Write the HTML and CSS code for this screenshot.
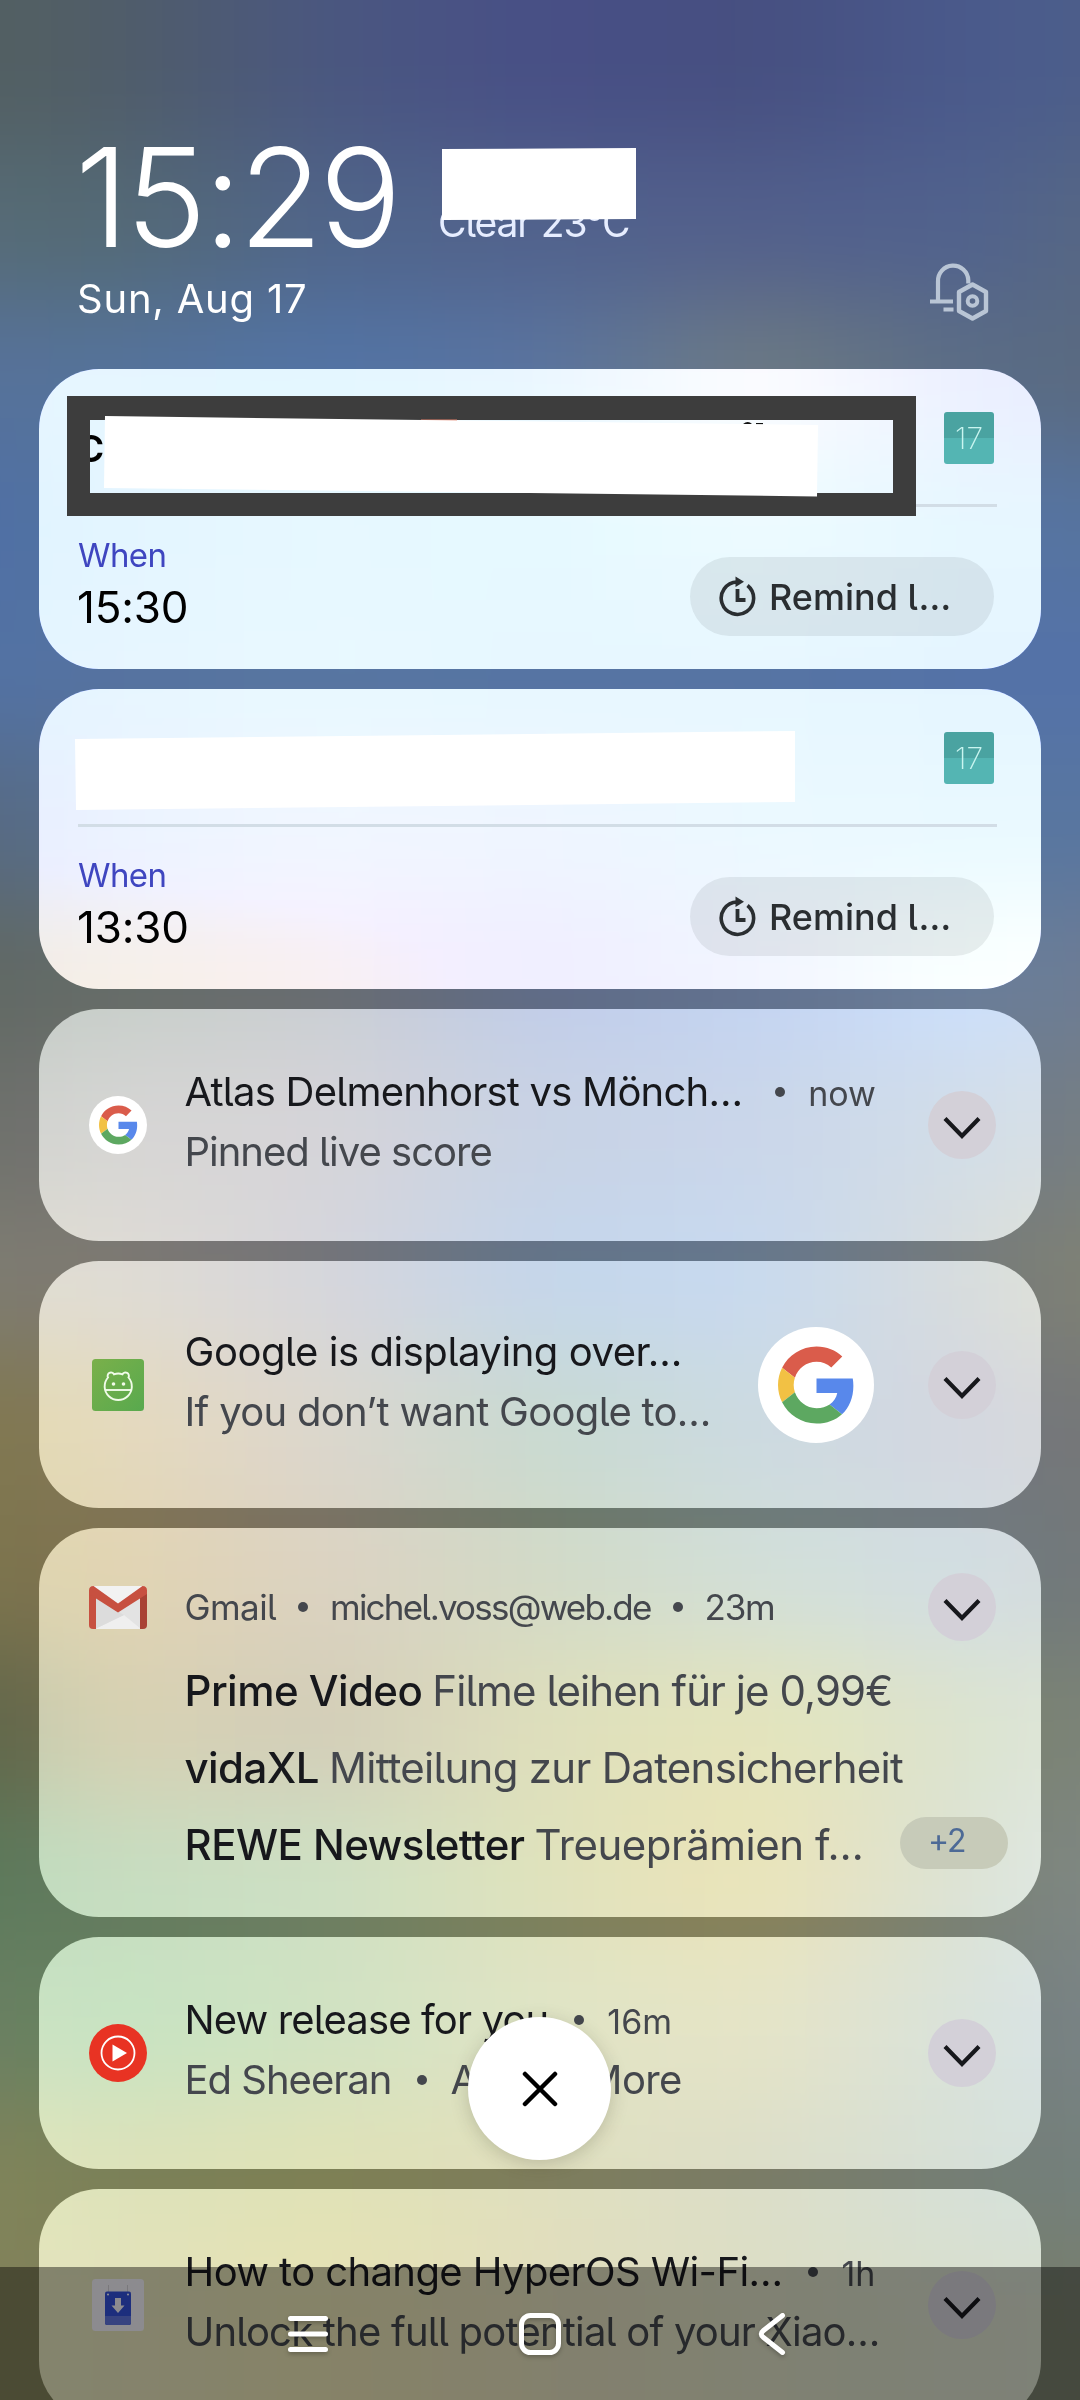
FILE: index.html
```html
<!DOCTYPE html>
<html lang="en">
<head>
<meta charset="utf-8">
<title>Notifications</title>
<link rel="stylesheet" href="styles.css">
</head>
<body>
<svg class="defs" width="0" height="0" aria-hidden="true">
  <symbol id="google" viewBox="0 0 48 48">
    <path fill="#da5c4b" d="M24 9.5c3.54 0 6.71 1.22 9.21 3.6l6.85-6.85C35.9 2.38 30.47 0 24 0 14.62 0 6.51 5.38 2.56 13.22l7.98 6.19C12.43 13.72 17.74 9.5 24 9.5z"/>
    <path fill="#5888eb" d="M46.98 24.55c0-1.57-.15-3.09-.38-4.55H24v9.02h12.94c-.58 2.96-2.26 5.48-4.78 7.18l7.73 6c4.51-4.18 7.09-10.36 7.09-17.65z"/>
    <path fill="#f2c144" d="M10.53 28.59c-.48-1.45-.76-2.99-.76-4.59s.27-3.14.76-4.59l-7.98-6.19C.92 16.46 0 20.12 0 24c0 3.88.92 7.54 2.56 10.78l7.97-6.19z"/>
    <path fill="#5da861" d="M24 48c6.48 0 11.93-2.13 15.89-5.81l-7.73-6c-2.15 1.45-4.92 2.3-8.16 2.3-6.26 0-11.57-4.22-13.47-9.91l-7.98 6.19C6.51 42.62 14.62 48 24 48z"/>
  </symbol>
  <symbol id="chevron" viewBox="0 0 68 68">
    <path d="M17 27.5 34 45 51 27.5" fill="none" stroke="#17181c" stroke-width="4.2"/>
  </symbol>
  <symbol id="later" viewBox="0 0 40 42">
    <path d="M28.5 9.500A16.200 16.200 0 1 1 18 6" fill="none" stroke="#2a2e31" stroke-width="3.6"/>
    <path d="M16.500 0.500 25 5.800 16.500 11z" fill="#2a2e31"/>
    <path d="M18.500 13v11h8" fill="none" stroke="#2a2e31" stroke-width="3.8"/>
  </symbol>
</svg>

<div class="backdrop">
  <div class="wallpaper">
    <i class="w1"></i><i class="w1"></i><i class="w2"></i><i class="w3"></i><i class="w4"></i><i class="w5"></i><i class="w6"></i><i class="w7"></i><i class="w8"></i><i class="w9"></i><i class="w10"></i><i class="w11"></i><i class="w12"></i><i class="w13"></i><i class="w14"></i><i class="w15"></i><i class="w16"></i><i class="w16"></i>
  </div>
</div>

<header class="top">
  <div class="top-row">
    <div class="clock">15:29</div>
    <div class="weather">Clear 23°C
      <svg class="mask mask-w" width="200" height="75" viewBox="0 0 200 75"><path d="M2 1 196 0v71L2 72z" fill="#fff"/></svg>
    </div>
  </div>
  <div class="date-row">
    <div class="date">Sun, Aug 17</div>
    <svg class="bell" width="64" height="60" viewBox="0 0 64 60" fill="none" stroke="#b9c5d5" stroke-width="4.2">
      <path d="M1 38.500h23M14.500 46.500h10M9 38V18.500A15 15 0 0 1 39.300 17v3.500"/>
      <path d="M43.500 21.500 57 29v19L43.500 55.500 30 48V29z" stroke-linejoin="round" stroke-width="4.400"/>
      <circle cx="43.500" cy="38" r="4.800" stroke-width="4"/>
    </svg>
  </div>
</header>

<main class="list">
  <section class="card event">
    <div class="event-head">
      <span class="event-c">C</span>
      <svg class="mask mask-a" width="850" height="122" viewBox="0 0 850 122">
        <path d="M676 28q5-4 9 0zM689 27h7v1.500h-7z" fill="#111"/>
        <path fill-rule="evenodd" fill="#3d3d3d" d="M0 0h849v120H0zM23 24v73h803V24z"/>
        <path d="M354 23.500h36v3h-36z" fill="#e0806a"/>
        <path d="M38 20 751 29l-1 71.500L37 92z" fill="#fff"/>
      </svg>
      <div class="cal">17</div>
    </div>
    <div class="event-body">
      <div class="when"><div class="label">When</div><div class="time">15:30</div></div>
      <button class="remind"><svg width="40" height="42"><use href="#later"/></svg>Remind l…</button>
    </div>
  </section>

  <section class="card event">
    <div class="event-head">
      <svg class="mask mask-b" width="724" height="82" viewBox="0 0 724 82"><path d="M1 9 721 1v71L2 80z" fill="#fff"/></svg>
      <div class="cal">17</div>
    </div>
    <div class="event-body">
      <div class="when"><div class="label">When</div><div class="time">13:30</div></div>
      <button class="remind"><svg width="40" height="42"><use href="#later"/></svg>Remind l…</button>
    </div>
  </section>

  <section class="card note">
    <div class="app"><span class="disc"><svg width="39" height="40"><use href="#google"/></svg></span></div>
    <div class="text">
      <div class="line"><span class="title t1">Atlas Delmenhorst vs Mönch…</span><b class="dot d1"></b><span class="age">now</span></div>
      <div class="line"><span class="sub s1">Pinned live score</span></div>
    </div>
    <svg class="chev" width="68" height="68"><use href="#chevron"/></svg>
  </section>

  <section class="card note tall">
    <div class="app">
      <svg width="52" height="52" viewBox="0 0 52 52">
        <defs><linearGradient id="gr" x1="0" y1="0" x2="1" y2="1"><stop offset="0" stop-color="#7ab04a"/><stop offset="1" stop-color="#58a94e"/></linearGradient></defs>
        <rect width="52" height="52" rx="3.500" fill="url(#gr)"/>
        <g fill="none" stroke="#f0fbe8" stroke-width="1.900">
          <path d="M22 15.300a13 13 0 0 1 8.500 0 3.400 3.400 0 1 1 6 3.200 13.600 13.600 0 1 1-20.500 0 3.400 3.400 0 1 1 6-3.200z"/>
          <path d="M13 31h27"/>
        </g>
        <circle cx="21.500" cy="25" r="1.800" fill="#f0fbe8"/><circle cx="31.500" cy="25" r="1.800" fill="#f0fbe8"/>
      </svg>
    </div>
    <div class="text">
      <div class="line"><span class="title t2">Google is displaying over…</span></div>
      <div class="line"><span class="sub">If you don’t want Google to…</span></div>
    </div>
    <span class="disc big"><svg width="77" height="78"><use href="#google"/></svg></span>
    <svg class="chev" width="68" height="68"><use href="#chevron"/></svg>
  </section>

  <section class="card mail">
    <div class="mail-head">
      <div class="app">
        <svg width="58" height="43" viewBox="0 0 58 43">
          <path d="M3 0h52v43H3z" fill="#e3e3e3"/>
          <path d="M4 0h50L29 20z" fill="#f2f2f2"/>
          <path d="M6 43 35 29 52 43z" fill="#efefef"/>
          <path d="M6 11 35 29 6 43z" fill="#dcdcdc"/>
          <path d="M0 4v35q0 4 4 4h3V11z" fill="#c75040"/>
          <path d="M58 4v35q0 4-4 4h-3V11z" fill="#a94234"/>
          <path d="M0 4.500Q0 0 4.500 0L29 17.500 53.500 0Q58 0 58 4.500V8L29 26.500 0 8z" fill="#c75040"/>
        </svg>
      </div>
      <div class="meta"><span class="g1">Gmail</span><b class="dot"></b><span class="g2">michel.voss@web.de</span><b class="dot"></b><span class="g3">23m</span></div>
      <svg class="chev" width="68" height="68"><use href="#chevron"/></svg>
    </div>
    <div class="mails">
      <div class="mail-line"><strong>Prime Video</strong><span class="m1">Filme leihen für je 0,99€</span></div>
      <div class="mail-line"><strong>vidaXL</strong><span class="m2">Mitteilung zur Datensicherheit</span></div>
      <div class="mail-line"><strong>REWE Newsletter</strong><span class="m3">Treueprämien f…</span><em class="more">+2</em></div>
    </div>
  </section>

  <section class="card note">
    <div class="app">
      <svg width="58" height="58" viewBox="0 0 58 58"><circle cx="29" cy="29" r="29" fill="#e83323"/><circle cx="29" cy="29" r="16.500" fill="none" stroke="#fff" stroke-width="1.800"/><path d="M23.500 20.500v17L38 29z" fill="#fff"/></svg>
    </div>
    <div class="text">
      <div class="line"><span class="title t3">New release for you</span><b class="dot"></b><span class="age">16m</span></div>
      <div class="line"><span class="sub s3">Ed Sheeran</span><b class="dot"></b><span class="sub s4">A Little More</span></div>
    </div>
    <svg class="chev" width="68" height="68"><use href="#chevron"/></svg>
  </section>

  <section class="card note">
    <div class="app">
      <svg width="52" height="52" viewBox="0 0 52 52">
        <rect width="52" height="52" rx="3.500" fill="#f1f0f6"/>
        <path d="M16.500 6v8M35.500 6v8" stroke="#d0cfd6" stroke-width="1"/>
        <rect x="13" y="12.500" width="26" height="33.500" rx="2" fill="#3350d8"/>
        <path d="M13 37h26v6.500a2.500 2.500 0 0 1-2.500 2.500h-21a2.500 2.500 0 0 1-2.500-2.500z" fill="#5f74dc"/>
        <path d="M23 19h6v7.500h3.500L26 34l-6.500-7.500H23z" fill="#f1f0f6"/>
        <circle cx="16" cy="15.500" r="1" fill="#fff"/><circle cx="36" cy="15.500" r="1" fill="#fff"/>
      </svg>
    </div>
    <div class="text">
      <div class="line"><span class="title">How to change HyperOS Wi-Fi…</span><b class="dot"></b><span class="age">1h</span></div>
      <div class="line"><span class="sub s5">Unlock the full potential of your Xiao…</span></div>
    </div>
    <svg class="chev" width="68" height="68"><use href="#chevron"/></svg>
  </section>
</main>

<button class="clear"><svg width="36" height="36" viewBox="0 0 36 36"><path d="M3 3 33 33M33 3 3 33" stroke="#000" stroke-width="4.500" stroke-linecap="round"/></svg></button>

<nav class="nav">
  <svg width="40" height="40" viewBox="0 0 40 40"><path d="M2.500 4.500h35M2.500 20h35M2.500 35.500h35" stroke="#fff" stroke-width="5" stroke-linecap="round"/></svg>
  <svg width="42" height="42" viewBox="0 0 42 42"><rect x="2.500" y="2.500" width="37" height="37" rx="9" fill="none" stroke="#fff" stroke-width="5"/></svg>
  <svg width="28" height="42" viewBox="0 0 28 42"><path d="M24.500 2.500 5.500 17.500q-4.500 3.500 0 7L24.500 39.500" fill="none" stroke="#fff" stroke-width="5" stroke-linecap="round"/></svg>
</nav>
</body>
</html>
```
FILE: styles.css
```css
* { box-sizing: border-box; }
html { background: #5a6a80; }
body {
  margin: 0;
  width: 1080px;
  height: 2400px;
  overflow: hidden;
  position: relative;
  font-family: Inter, "Noto Sans", sans-serif;
  font-feature-settings: "cv05";
  color: #17181c;
  white-space: nowrap;
}
button { border: 0; padding: 0; font: inherit; color: inherit; }
.defs { position: absolute; }
svg { display: block; flex: none; }

/* blurred wallpaper: one horizontal gradient per band */
.backdrop {
  position: absolute;
  inset: 0;
  z-index: -2;
  overflow: hidden;
}
.wallpaper {
  margin: -150px -180px;
  filter: blur(48px);
  display: flex;
  flex-direction: column;
}
.wallpaper i {
  height: 150px;
  background: linear-gradient(to right, var(--a) 180px, var(--b) 288px, var(--c) 504px, var(--d) 720px, var(--e) 936px, var(--f) 1152px, var(--g) 1260px);
}
.w1 { --a: #536062; --b: #505d68; --c: #4a5780; --d: #484f86; --e: #464f80; --f: #4a5a8c; --g: #4c5e8a; }
.w2 { --a: #566b76; --b: #546a74; --c: #50658a; --d: #51628c; --e: #525f8c; --f: #50628e; --g: #566784; }
.w3 { --a: #56729a; --b: #55739a; --c: #5274a6; --d: #5a74a0; --e: #6e7b82; --f: #5a6c86; --g: #5a6a80; }
.w4 { --a: #4f70a4; --b: #5272a2; --c: #5675a4; --d: #5476a4; --e: #5c7898; --f: #5574a2; --g: #5674a0; }
.w5 { --a: #5272a4; --b: #5672a0; --c: #5776a2; --d: #5674a4; --e: #5674a4; --f: #5472a8; --g: #5472a8; }
.w6 { --a: #566a84; --b: #5a708c; --c: #607494; --d: #5e7294; --e: #5a7698; --f: #5876a0; --g: #5876a0; }
.w7 { --a: #606864; --b: #656c66; --c: #686c70; --d: #5e6a88; --e: #617290; --f: #6a7e9c; --g: #6c7c94; }
.w8 { --a: #6e706c; --b: #747472; --c: #747276; --d: #667082; --e: #687488; --f: #707c86; --g: #767e84; }
.w9 { --a: #7e7c72; --b: #7e7a72; --c: #74747a; --d: #62748a; --e: #66788e; --f: #767a7a; --g: #808274; }
.w10 { --a: #807850; --b: #84785a; --c: #7a746c; --d: #66786e; --e: #6a7880; --f: #72747e; --g: #767878; }
.w11 { --a: #7c744e; --b: #80724f; --c: #7a7060; --d: #707864; --e: #707d76; --f: #707c82; --g: #727879; }
.w12 { --a: #60664a; --b: #767050; --c: #706a56; --d: #7c7d5a; --e: #828258; --f: #79816d; --g: #7c8478; }
.w13 { --a: #5c7a5c; --b: #647a5e; --c: #6c7e62; --d: #7d805a; --e: #8a8256; --f: #788074; --g: #808884; }
.w14 { --a: #6a8062; --b: #648260; --c: #6e8060; --d: #7e8264; --e: #848264; --f: #76807a; --g: #788286; }
.w15 { --a: #80845a; --b: #7b8058; --c: #7e8054; --d: #7e7d5c; --e: #7a7c66; --f: #747e76; --g: #74807c; }
.w16 { --a: #82825a; --b: #82805a; --c: #868050; --d: #807b5a; --e: #7a7c62; --f: #767d6a; --g: #787e6c; }

.mask { position: absolute; }

.top { height: 369px; padding: 136px 87px 0 77px; color: #fff; }
.top-row { display: flex; height: 120px; }
.clock { width: 361px; font-size: 137px; font-weight: 300; line-height: 122px; letter-spacing: -3.4px; text-indent: -2px; }
.weather { position: relative; padding-top: 62px; font-size: 39px; line-height: 50px; letter-spacing: -1.1px; color: #e6edff; }
.mask-w { left: 2px; top: 12px; }
.date-row { display: flex; justify-content: space-between; }
.date { font-size: 40px; line-height: 50px; padding-top: 18px; letter-spacing: 0.8px; }
.bell { margin: 7px 0 0; }

.list { display: flex; flex-direction: column; gap: 20px; padding: 0 39px; }
.card { position: relative; height: 232px; flex: none; }
.card::before {
  content: "";
  position: absolute;
  inset: 0;
  z-index: -1;
  border-radius: 60px;
  background: #626262;
  mix-blend-mode: plus-lighter;
}
.event { height: 300px; padding: 0 44px 0 39px; }
.event::before { background: #918380; }
.event-head {
  display: flex;
  justify-content: flex-end;
  height: 138px;
  padding: 43px 3px 0 0;
  border-bottom: 3px solid #d2dde6;
}
.event-c { position: absolute; left: 38px; top: 60px; font-size: 37px; line-height: 40px; font-weight: 600; color: #000; }
.mask-a { left: 28px; top: 27px; }
.mask-b { left: 35px; top: 41px; }
.cal {
  width: 50px;
  height: 52px;
  border-radius: 3px;
  background: linear-gradient(#4aa3a1 50%, #54b5b3 50%);
  color: #c9f5f0;
  font-size: 30px;
  font-weight: 200;
  line-height: 52px;
  text-align: center;
}
.event-body { display: flex; justify-content: space-between; padding: 30px 3px 0 0; }
.label { font-size: 33px; line-height: 40px; margin-top: -2px; letter-spacing: -0.6px; color: #3f46c0; }
.time { font-size: 44px; line-height: 52px; margin: 6px 0 0 -1px; letter-spacing: -0.2px; color: #000; }
.remind {
  display: flex;
  align-items: center;
  width: 304px;
  height: 79px;
  margin-top: 20px;
  padding-left: 29px;
  border-radius: 40px;
  background: rgba(45, 50, 55, 0.09);
  color: #2a2e31;
  font-size: 36px;
  font-weight: 500;
}
.remind svg { margin-right: 10px; }

.note { display: flex; align-items: center; padding: 0 45px 0 50px; }
.tall { height: 247px; }
.app { width: 58px; margin-right: 37.5px; display: flex; justify-content: center; flex: none; }
.disc { display: flex; align-items: center; justify-content: center; width: 58px; height: 58px; border-radius: 50%; background: #fff; }
.big { width: 116px; height: 116px; margin-right: 54px; }
.text { flex: 1; margin-top: -7px; }
.line { display: flex; align-items: center; height: 60px; }
.title { font-size: 40px; letter-spacing: -0.6px; }
.sub { font-size: 40px; letter-spacing: -0.7px; color: #44474d; }
.age { font-size: 34px; color: #44474d; padding-top: 3px; }
.dot { width: 10px; height: 10px; margin: 0 23px 0 26px; border-radius: 50%; background: #44474d; flex: none; }
.d1 { margin-left: 33px; }
.t1 { letter-spacing: -0.78px; }
.t2 { letter-spacing: -0.45px; }
.t3 { letter-spacing: -0.85px; }
.s1, .s3 { letter-spacing: -1px; }
.s4 { letter-spacing: -0.6px; }
.s5 { letter-spacing: -0.8px; }
.chev { border-radius: 50%; background: #d3d0d8; }

.mail { height: 389px; padding: 45px 45px 0 50px; }
.mail-head { display: flex; align-items: center; }
.meta { flex: 1; display: flex; align-items: center; font-size: 35px; color: #44474d; }
.meta .dot { margin: 0 22px 0 22px; }
.g1 { letter-spacing: -0.6px; }
.g2 { letter-spacing: -1.8px; }
.g3 { letter-spacing: -1.3px; }
.mails { padding: 11px 0 0 95.5px; }
.mail-line { display: flex; align-items: center; height: 77px; font-size: 42px; letter-spacing: -0.7px; color: #44474d; }
.mail-line strong { font-weight: 500; letter-spacing: -0.55px; color: #17181c; margin-right: 10px; }
.mail-line .m1 { letter-spacing: -0.92px; }
.mail-line .m3 { letter-spacing: -0.5px; }
.more {
  width: 108px;
  height: 52px;
  margin: -3px -12px 0 auto;
  padding-left: 28px;
  border-radius: 26px;
  background: #c7cbb9;
  color: #4d6a96;
  font: normal 32px/48px Inter, sans-serif;
  letter-spacing: -1px;
}

.clear {
  position: absolute;
  left: 468px;
  top: 2017px;
  width: 143px;
  height: 143px;
  border-radius: 50%;
  background: #fff;
  display: flex;
  align-items: center;
  justify-content: center;
  box-shadow: 0 4px 18px rgba(60, 60, 40, 0.22);
}
.nav {
  position: absolute;
  left: 0;
  bottom: 0;
  width: 1080px;
  height: 133px;
  background: rgba(0, 0, 0, 0.42);
  display: flex;
  align-items: center;
  padding: 0 0 0 288px;
}
.nav svg { filter: drop-shadow(0 2px 2px rgba(0, 0, 0, 0.25)); }
.nav svg:nth-child(2) { margin-left: 191px; }
.nav svg:nth-child(3) { margin-left: 197px; }
```
